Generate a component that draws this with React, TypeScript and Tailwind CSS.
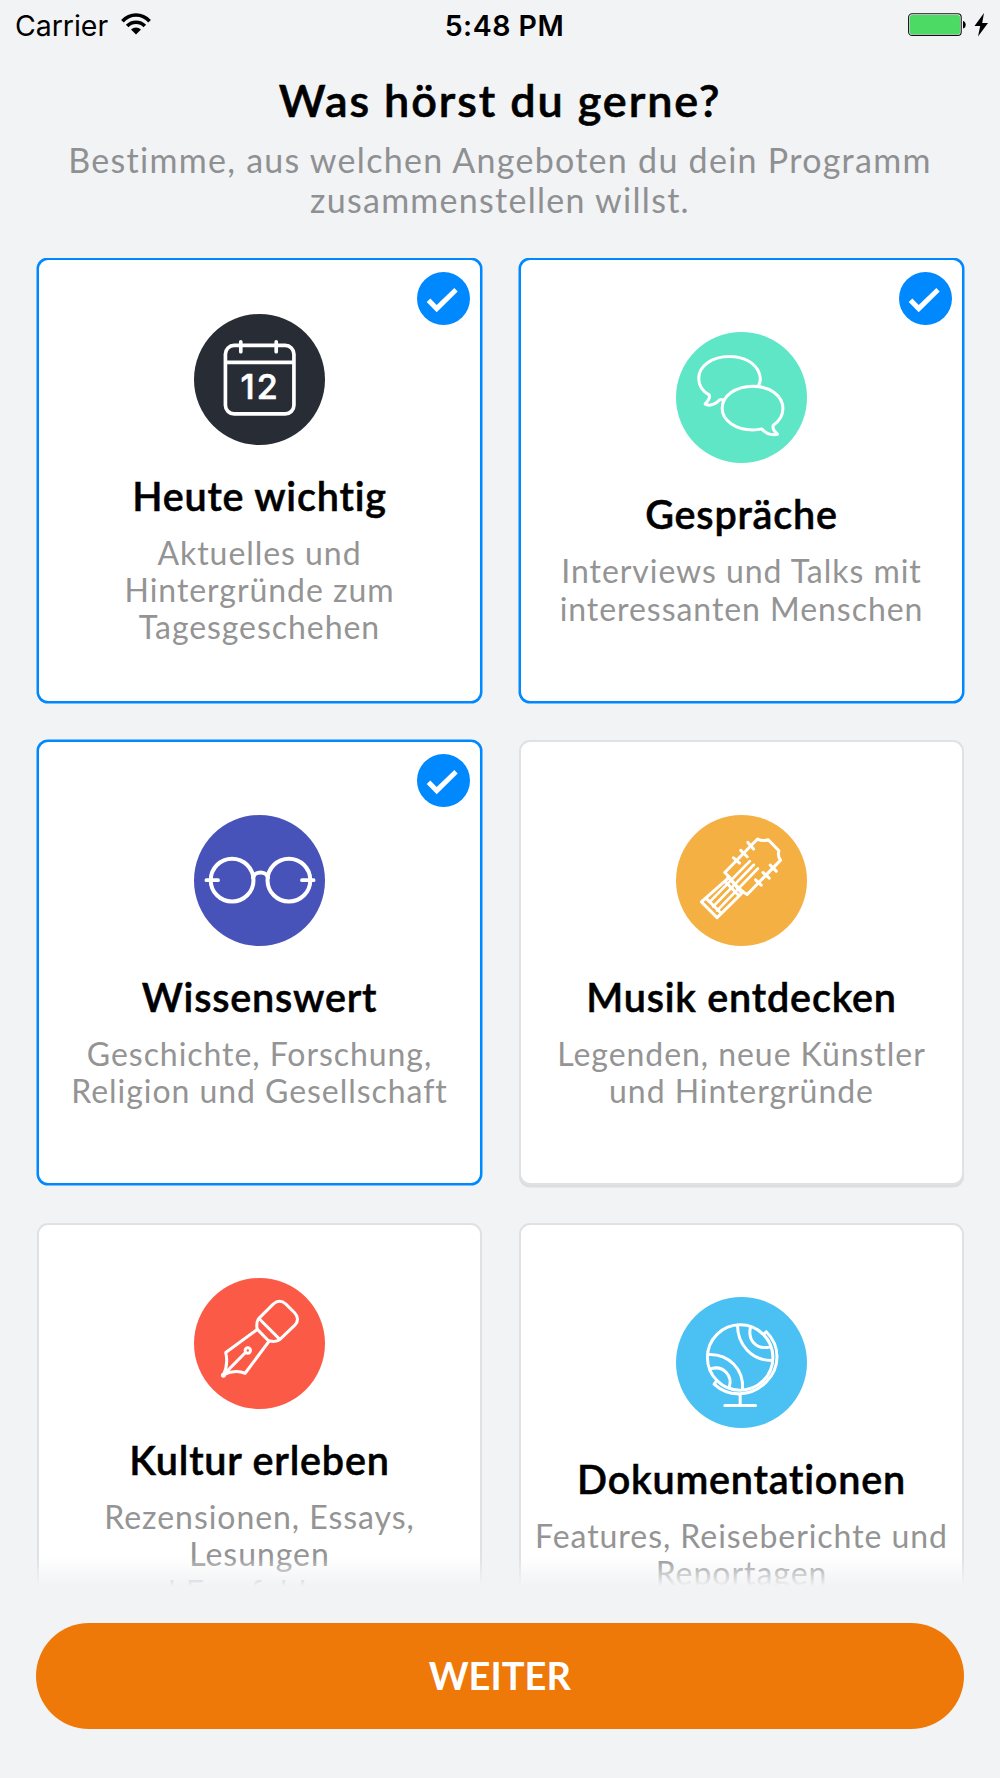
import type { ReactNode } from "react";

function Disc({ box, color, children }: { box: string; color: string; children: ReactNode }) {
  return (
    <svg
      viewBox={box}
      className={`size-[131px] shrink-0 rounded-full ${color}`}
      fill="none"
      stroke="white"
      strokeWidth={9}
      strokeLinecap="round"
      strokeLinejoin="round"
    >
      {children}
    </svg>
  );
}

const calendar = (
  <Disc box="42 42 392 392" color="bg-[#282c35]">
    <rect x="136" y="136" width="205" height="205" rx="26" strokeWidth="11" />
    <path d="M136 187H341" strokeWidth="11" strokeLinecap="butt" />
    <path d="M182 125V155M288 125V155" strokeWidth="11" />
    <text x="237" y="296" textAnchor="middle" fontSize="102" fontWeight="500" fill="white" stroke="white" strokeWidth="2" className="font-['Inter',sans-serif]" textLength="112">12</text>
  </Disc>
);

const bubbles = (
  <Disc box="49 37 392 392" color="bg-[#5fe6c6]">
    <path d="M297 195C303 184 302 172 298 160C286 128 250 110 209 110C157 110 117 138 117 176C117 197 130 215 149 226C153 234 144 244 136 253C152 261 168 251 180 240C185 237 188 241 190 242" />
    <path d="M340 316C359 303 369 286 369 266C369 228 329 199 279 199C228 199 187 228 187 265C187 302 228 330 279 330C289 330 298 329 306 327C318 341 333 347 353 343C346 337 337 325 340 316Z" />
  </Disc>
);

const glasses = (
  <Disc box="42 45 392 392" color="bg-[#4853b9]">
    <circle cx="156" cy="240" r="64" strokeWidth="12" />
    <circle cx="326" cy="240" r="64" strokeWidth="12" />
    <path d="M219 232C223 212 259 212 263 232" strokeWidth="12" />
    <path d="M79 240H114M365 240H400" strokeWidth="11" />
  </Disc>
);

const guitar = (
  <Disc box="49 45 392 392" color="bg-[#f5b043]">
    <path d="M210 232L195 217L293 117Q309 125 325 119L357 152Q352 167 362 180L262 283L248 274" />
    <path d="M264 127L281 147M243 151L262 170M221 173L239 189M331 195L349 213M309 217L328 234M287 239L304 255" />
    <path d="M208 232L125 305L172 352L246 279ZM195 243L236 285M138 293L184 339" />
    <path d="M270 183L150 305M282 194L160 319M294 205L172 331" strokeWidth="8" />
    <path d="M204 231L248 274" />
  </Disc>
);

const pen = (
  <Disc box="42 39 392 392" color="bg-[#fb5a46]">
    <path d="M237 159L279 117Q298 100 317 117L343 143Q361 162 343 181L300 222C287 234 271 228 264 226L231 192C229 181 227 170 237 159ZM237 161L298 222" />
    <path d="M231 193L137 262Q145 298 130 329Q164 312 195 324L266 229M130 329L196 262" />
    <circle cx="203" cy="256" r="8" />
    <circle cx="130" cy="330" r="3" fill="white" />
  </Disc>
);

const globe = (
  <Disc box="49 49 392 392" color="bg-[#4bc1f3]">
    <circle cx="241" cy="230" r="98" />
    <path d="M233 133C233 190 274 240 337 239M272 139C263 178 289 207 329 199" />
    <path d="M145 221C207 218 252 266 248 324M153 264C190 252 220 284 208 320" />
    <path d="M319 153C362 195 362 260 319 303C276 348 207 351 163 310L169 302M319 153L313 159" />
    <path d="M241 340V373M195 374H287" />
  </Disc>
);

type Topic = { title: string; lines: string[]; icon: ReactNode; selected?: boolean };

const topics: Topic[] = [
  { title: "Heute wichtig", lines: ["Aktuelles und", "Hintergründe zum", "Tagesgeschehen"], icon: calendar, selected: true },
  { title: "Gespräche", lines: ["Interviews und Talks mit", "interessanten Menschen"], icon: bubbles, selected: true },
  { title: "Wissenswert", lines: ["Geschichte, Forschung,", "Religion und Gesellschaft"], icon: glasses, selected: true },
  { title: "Musik entdecken", lines: ["Legenden, neue Künstler", "und Hintergründe"], icon: guitar },
  { title: "Kultur erleben", lines: ["Rezensionen, Essays,", "Lesungen", "und Empfehlungen"], icon: pen },
  { title: "Dokumentationen", lines: ["Features, Reiseberichte und", "Reportagen"], icon: globe },
];

function TopicCard({ title, lines, icon, selected }: Topic) {
  return (
    <article
      className={`relative flex h-[445px] flex-col items-center justify-center rounded-[11px] border-2 bg-white pb-[2px] ${
        selected ? "border-[#0088ff] shadow-[0_0_0_0.5px_#0088ff]" : "border-[#e0e1e3] shadow-[0_2.5px_0_0_#dddee0]"
      }`}
    >
      {icon}
      <h2 className="mt-[28px] text-[39.5px] leading-[46px] font-semibold tracking-[0.8px] whitespace-nowrap text-black [-webkit-text-stroke:0.5px_black]">{title}</h2>
      <p className="mt-[15px] text-center text-[32px] leading-[37.3px] tracking-[0.95px] whitespace-nowrap text-[#949494]">
        {lines.map((line) => (
          <span key={line} className="block">{line}</span>
        ))}
      </p>
      {selected && (
        <svg viewBox="0 0 53 53" className="absolute top-[12px] right-[10px] size-[53px]">
          <circle cx="26.5" cy="26.5" r="26.5" fill="#0088ff" />
          <path d="M9.7 30L13.3 26.6L19.7 33L37.3 16L40.7 19.5L19.7 40.3Z" fill="white" />
        </svg>
      )}
    </article>
  );
}

function StatusBar() {
  return (
    <div className="grid h-[53px] grid-cols-3 items-center pr-[12px] pl-[15px] font-['Inter',sans-serif] text-[28.5px] leading-none text-black">
      <div className="flex items-center gap-[13px]">
        <span className="tracking-[-0.05px]">Carrier</span>
        <svg viewBox="0 0 30 22" className="mt-[-5px] h-[22px] w-[30px]" fill="none" stroke="black" strokeWidth="3.6">
          <path d="M1.4 8.2C9 0 21 0 28.6 8.2" />
          <path d="M6.2 13C11 8 19 8 23.8 13" />
          <path d="M10 16.6C13 13.8 17 13.8 20 16.6L15 21.6Z" fill="black" stroke="none" />
        </svg>
      </div>
      <span className="pl-[6px] text-center font-semibold tracking-[0.5px]">5:48 PM</span>
      <div className="flex items-center justify-end">
        <svg viewBox="0 0 80 24" className="mt-[-4px] h-[24px] w-[80px]">
          <rect x="0.6" y="0.8" width="52.6" height="21.6" rx="3.5" fill="#f2f3f5" stroke="#111" strokeWidth="1.1" />
          <rect x="1.7" y="1.9" width="50.4" height="19.4" rx="2.5" fill="#4cd964" />
          <path d="M55 8C58.6 9 58.6 14.6 55 15.6Z" fill="black" />
          <path d="M76 0L66.5 13H72.2L70 23.6L80 10H74.2Z" fill="black" />
        </svg>
      </div>
    </div>
  );
}

export default function App() {
  return (
    <div className="flex h-[1778px] w-[1000px] flex-col overflow-hidden bg-[#f2f3f5] font-['Lato',sans-serif]">
      <StatusBar />
      <header className="flex shrink-0 flex-col items-center pt-[20px] text-center">
        <h1 className="text-[45px] leading-[54px] font-semibold tracking-[1.9px] text-black [-webkit-text-stroke:0.6px_black]">Was hörst du gerne?</h1>
        <p className="mt-[13px] text-[34px] leading-[40px] tracking-[1.28px] whitespace-nowrap text-[#8f9092]">
          Bestimme, aus welchen Angeboten du dein Programm
          <br />
          zusammenstellen willst.
        </p>
      </header>
      <main className="relative mt-[38px] h-[1328px] shrink-0 overflow-hidden pr-[36px] pl-[37px]">
        <div className="grid grid-cols-2 gap-x-[37px] gap-y-[37.3px]">
          {topics.map((t) => (
            <TopicCard key={t.title} {...t} />
          ))}
        </div>
        <div className="absolute inset-x-0 bottom-0 h-[29px] bg-gradient-to-b from-[#f2f3f5]/0 to-[#f2f3f5]" />
      </main>
      <footer className="pt-[37px] pr-[36.5px] pl-[36px]">
        <button className="h-[106px] w-full rounded-full bg-[#ee7909] pb-[2px] text-[38px] leading-none font-bold text-white">WEITER</button>
      </footer>
    </div>
  );
}
